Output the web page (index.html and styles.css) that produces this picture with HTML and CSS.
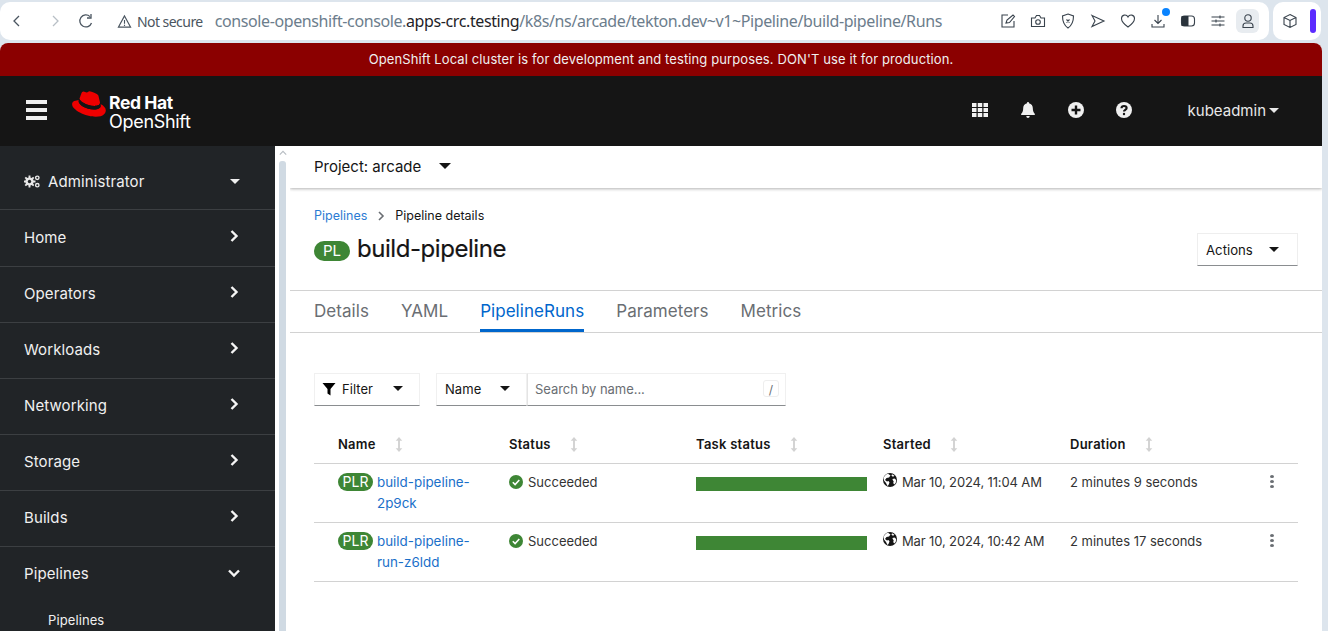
FILE: index.html
```html
<!DOCTYPE html>
<html lang="en">
<head>
    <meta charset="UTF-8">
    <title>build-pipeline - Pipeline details - Red Hat OpenShift</title>
    <link rel="stylesheet" href="styles.css">
</head>
<body>
    <!-- browser toolbar -->
    <div class="browser">
        <div class="omnibox">
            <svg class="nav-icon back" viewBox="0 0 16 16"><path d="M10 3 5 8l5 5"/></svg>
            <svg class="nav-icon forward" viewBox="0 0 16 16"><path d="m6 3 5 5-5 5"/></svg>
            <svg class="nav-icon reload" viewBox="0 0 16 16"><path d="M13.5 10A6 6 0 1 1 12 3.6"/><path d="M13 1v4H9" /></svg>
            <svg class="warn-icon" viewBox="0 0 16 16"><path d="M8 2 1.500 14h13z"/><path d="M8 6.500v4M8 11.500v1.200"/></svg>
            <span class="not-secure">Not secure</span>
            <span class="url">console-openshift-console.<b>apps-crc.testing</b>/k8s/ns/arcade/tekton.dev~v1~Pipeline/build-pipeline/Runs</span>
            <div class="tools">
                <svg viewBox="0 0 16 16"><path d="M8 2H2v12h12V8"/><path d="m6 10 1-3 6-5 1.500 1.500-5 6z"/></svg>
                <svg viewBox="0 0 16 16"><path d="M1.500 5h3.500l1.500-2.500h3L11 5h3.500v8.500h-13z"/><circle cx="8" cy="9" r="2.300"/></svg>
                <svg viewBox="0 0 16 16"><path d="M8 1 13.500 3c0 5.500-1 9-5.500 12C3.500 12 2.500 8.500 2.500 3z"/><path d="m6.500 6.500 3 3m0-3-3 3"/></svg>
                <svg viewBox="0 0 16 16"><path d="m2 2.500 12 5.500-12 5.500 3-5.500z"/></svg>
                <svg viewBox="0 0 16 16"><path d="M8 14C3 10.500 1.500 8 1.500 5.500 1.500 1.500 6.500 1 8 4c1.500-3 6.500-2.500 6.500 1.500C14.500 8 13 10.500 8 14z"/></svg>
                <span class="download">
                    <svg viewBox="0 0 16 16"><path d="M8 2v8M4.500 7 8 10.500 11.500 7M2 11v3h12v-3"/></svg>
                    <i class="download-dot"></i>
                </span>
                <svg viewBox="0 0 16 16"><rect x="1.500" y="3" width="13" height="10" rx="3"/><path class="solid" d="M1.500 3h7v10h-7z"/></svg>
                <svg viewBox="0 0 16 16"><path d="M1.500 4h13M1.500 8h13M1.500 12h13M10 2.500v3M6 6.500v3M10 10.500v3"/></svg>
                <span class="profile">
                    <svg viewBox="0 0 16 16"><circle cx="8" cy="5" r="3.200"/><path d="M3 14.500v-1.500c0-2 1.500-3 3-3h4c1.500 0 3 1 3 3v1.500z"/></svg>
                </span>
            </div>
        </div>
        <div class="ext-box">
            <svg viewBox="0 0 16 16"><path d="M8 1.500 14 4.500v7L8 14.500 2 11.500v-7zM2 4.500l6 3 6-3M8 7.500v7"/></svg>
            <i class="ext-pill"></i>
        </div>
    </div>

    <div class="app">
        <div class="banner">OpenShift Local cluster is for development and testing purposes. DON'T use it for production.</div>

        <header class="masthead">
            <div class="burger"><i></i><i></i><i></i></div>
            <svg class="hat" viewBox="0 0 192 145">
                <path fill="#e00" d="M127.470 83.490c12.510 0 30.610-2.580 30.610-17.460a14 14 0 0 0-.31-3.420l-7.450-32.360c-1.720-7.120-3.230-10.350-15.730-16.600C124.890 8.690 103.760.5 97.510.5 91.690.5 90 8 83.060 8c-6.680 0-11.640-5.600-17.890-5.600-6 0-9.910 4.090-12.930 12.500 0 0-8.410 23.720-9.490 27.160A6.430 6.430 0 0 0 42.530 44c0 9.220 36.300 39.450 84.940 39.450M160 72.070c1.730 8.190 1.730 9.050 1.730 10.130 0 14-15.740 21.770-36.430 21.770C78.540 104 37.580 76.600 37.580 58.490a18.450 18.450 0 0 1 1.510-7.330C22.270 52 .5 55 .5 74.220c0 31.480 74.590 70.280 133.650 70.280 45.280 0 56.700-20.480 56.700-36.650 0-12.720-11-27.160-30.830-35.780"/>
                <path fill="#151515" d="M160 72.070c1.730 8.190 1.730 9.050 1.730 10.130 0 14-15.740 21.770-36.430 21.770C78.540 104 37.580 76.600 37.580 58.490a18.450 18.450 0 0 1 1.510-7.330l3.660-9.060A6.430 6.430 0 0 0 42.530 44c0 9.220 36.300 39.450 84.940 39.450 12.510 0 30.610-2.580 30.610-17.460a14 14 0 0 0-.31-3.420z"/>
            </svg>
            <div class="brand">
                <span class="brand-top">Red Hat</span>
                <span class="brand-bottom">OpenShift</span>
            </div>
            <div class="mast-tools">
                <svg class="mast-icon" viewBox="0 0 16 16"><path d="M0 1h4.500v4H0zM5.750 1h4.500v4h-4.500zM11.500 1H16v4h-4.500zM0 6h4.500v4H0zM5.750 6h4.500v4h-4.500zM11.500 6H16v4h-4.500zM0 11h4.500v4H0zM5.750 11h4.500v4h-4.500zM11.500 11H16v4h-4.500z"/></svg>
                <svg class="mast-icon" viewBox="0 0 16 16"><path d="M8 0c-.7 0-1 .5-1 1.200C4.500 1.700 3.200 3.700 3.200 6c0 3.500-1 4.700-2 5.800-.4.500-.2 1.200.5 1.200h12.600c.7 0 .9-.7.500-1.200-1-1.100-2-2.300-2-5.800 0-2.300-1.300-4.300-3.800-4.800C9 .5 8.700 0 8 0zM6.300 14c0 1 .8 2 1.700 2s1.700-1 1.700-2z"/></svg>
                <svg class="mast-icon" viewBox="0 0 16 16"><circle cx="8" cy="8" r="8"/><path class="cut" d="M6.800 3.500h2.400v3.300h3.300v2.400H9.200v3.300H6.800V9.200H3.500V6.800h3.300z"/></svg>
                <svg class="mast-icon" viewBox="0 0 16 16"><circle cx="8" cy="8" r="8"/><path class="cut-line" d="M5.500 6.200C5.600 4.700 6.600 4 8 4s2.600.8 2.600 2.100c0 1.800-2.600 1.900-2.600 3.500"/><circle class="cut" cx="8" cy="12" r="1.200"/></svg>
            </div>
            <div class="user">kubeadmin<i class="caret caret-user"></i></div>
        </header>

        <div class="body-row">
            <nav class="sidebar">
                <div class="nav-row nav-perspective">
                    <span class="nav-label">
                        <svg class="cogs" viewBox="0 0 16 13">
                            <path stroke="#e8e8e8" stroke-width="1.900" d="M5.500 .5v12M-.5 6.500h12M1.300 2.300l8.400 8.400M9.700 2.300l-8.400 8.400"/>
                            <circle cx="5.500" cy="6.500" r="4.100" fill="#e8e8e8"/>
                            <circle cx="5.500" cy="6.500" r="1.700" fill="#212427"/>
                            <circle cx="13.300" cy="2.800" r="1.700" fill="none" stroke="#e8e8e8" stroke-width="1.400"/>
                            <circle cx="13.300" cy="10.200" r="1.700" fill="none" stroke="#e8e8e8" stroke-width="1.400"/>
                        </svg>
                        Administrator
                    </span>
                    <i class="caret caret-nav"></i>
                </div>
                <div class="nav-row nav-home">Home<svg class="chev" viewBox="0 0 10 14"><path d="m2.500 2 5 5-5 5"/></svg></div>
                <div class="nav-row">Operators<svg class="chev" viewBox="0 0 10 14"><path d="m2.500 2 5 5-5 5"/></svg></div>
                <div class="nav-row">Workloads<svg class="chev" viewBox="0 0 10 14"><path d="m2.500 2 5 5-5 5"/></svg></div>
                <div class="nav-row">Networking<svg class="chev" viewBox="0 0 10 14"><path d="m2.500 2 5 5-5 5"/></svg></div>
                <div class="nav-row">Storage<svg class="chev" viewBox="0 0 10 14"><path d="m2.500 2 5 5-5 5"/></svg></div>
                <div class="nav-row">Builds<svg class="chev" viewBox="0 0 10 14"><path d="m2.500 2 5 5-5 5"/></svg></div>
                <div class="nav-row nav-open">Pipelines<svg class="chev chev-down" viewBox="0 0 14 10"><path d="m2 2.500 5 5 5-5"/></svg></div>
                <div class="nav-sub">Pipelines</div>
            </nav>

            <div class="scroller">
                <svg class="scroll-up" viewBox="0 0 10 6"><path d="m1 5 4-4 4 4"/></svg>
                <div class="scroll-thumb"></div>
            </div>

            <main class="content">
                <div class="project-bar">
                    <span>Project: arcade</span>
                    <i class="caret caret-project"></i>
                </div>

                <div class="page-head">
                    <div class="crumbs">
                        <a class="link">Pipelines</a>
                        <svg class="crumb-sep" viewBox="0 0 8 10"><path d="m2 1 4 4-4 4"/></svg>
                        <span>Pipeline details</span>
                    </div>
                    <div class="title-row">
                        <h1 class="title"><span class="badge badge-pl">PL</span>build-pipeline</h1>
                        <button class="actions">Actions<i class="caret caret-dark"></i></button>
                    </div>
                </div>

                <div class="tabs">
                    <a class="tab">Details</a>
                    <a class="tab">YAML</a>
                    <a class="tab active">PipelineRuns</a>
                    <a class="tab">Parameters</a>
                    <a class="tab">Metrics</a>
                </div>

                <div class="list-area">
                    <div class="toolbar">
                        <div class="select filter">
                            <svg class="funnel" viewBox="0 0 14 14"><path d="M.5 1h13L8.500 7v6.500l-3-2V7z"/></svg>
                            <span>Filter</span>
                            <i class="caret caret-dark"></i>
                        </div>
                        <div class="search-group">
                            <div class="select name-select"><span>Name</span><i class="caret caret-dark"></i></div>
                            <div class="search">
                                <span class="placeholder">Search by name...</span>
                                <span class="slash">/</span>
                            </div>
                        </div>
                    </div>

                    <table class="runs">
                        <colgroup>
                            <col class="col-name"><col class="col-std"><col class="col-std"><col class="col-std"><col class="col-std"><col>
                        </colgroup>
                        <thead>
                            <tr>
                                <th class="first">Name<svg class="sort" viewBox="0 0 8 16"><path d="M4 0 7.500 4h-2.500v8h2.500L4 16 .5 12H3V4H.5z"/></svg></th>
                                <th>Status<svg class="sort" viewBox="0 0 8 16"><path d="M4 0 7.500 4h-2.500v8h2.500L4 16 .5 12H3V4H.5z"/></svg></th>
                                <th>Task status<svg class="sort" viewBox="0 0 8 16"><path d="M4 0 7.500 4h-2.500v8h2.500L4 16 .5 12H3V4H.5z"/></svg></th>
                                <th>Started<svg class="sort" viewBox="0 0 8 16"><path d="M4 0 7.500 4h-2.500v8h2.500L4 16 .5 12H3V4H.5z"/></svg></th>
                                <th>Duration<svg class="sort" viewBox="0 0 8 16"><path d="M4 0 7.500 4h-2.500v8h2.500L4 16 .5 12H3V4H.5z"/></svg></th>
                                <th></th>
                            </tr>
                        </thead>
                        <tbody>
                            <tr>
                                <td class="first"><div class="run-name"><span class="badge badge-plr">PLR</span><a class="link">build-pipeline-<br>2p9ck</a></div></td>
                                <td><span class="status"><svg class="ok" viewBox="0 0 14 14"><circle cx="7" cy="7" r="7"/><path d="m3.800 7.200 2.300 2.300 4.200-4.500"/></svg>Succeeded</span></td>
                                <td><div class="bar"></div></td>
                                <td><span class="started"><svg class="globe" viewBox="0 0 14 14"><circle cx="7" cy="7" r="7"/><path d="M5 .8 7.500 2.500 6 4.500 3.500 5 2 7 4 8.500 5.500 8l1 1.500L5.500 12l-1 1-1.500-3-2-2.500-.5-3L3 1.500zM9.500 6l2-.5 1.700 1.500-.5 3-1.500 1.500-1-1.500.5-1.500-1-1.500zM9 1.200l2.500 1.500-1.500 1-1.500-1z" fill="#fff"/></svg>Mar 10, 2024, 11:04 AM</span></td>
                                <td>2 minutes 9 seconds</td>
                                <td><span class="kebab"><i></i><i></i><i></i></span></td>
                            </tr>
                            <tr>
                                <td class="first"><div class="run-name"><span class="badge badge-plr">PLR</span><a class="link">build-pipeline-<br>run-z6ldd</a></div></td>
                                <td><span class="status"><svg class="ok" viewBox="0 0 14 14"><circle cx="7" cy="7" r="7"/><path d="m3.800 7.200 2.300 2.300 4.200-4.500"/></svg>Succeeded</span></td>
                                <td><div class="bar"></div></td>
                                <td><span class="started"><svg class="globe" viewBox="0 0 14 14"><circle cx="7" cy="7" r="7"/><path d="M5 .8 7.500 2.500 6 4.500 3.500 5 2 7 4 8.500 5.500 8l1 1.500L5.500 12l-1 1-1.500-3-2-2.500-.5-3L3 1.500zM9.500 6l2-.5 1.700 1.500-.5 3-1.500 1.500-1-1.500.5-1.500-1-1.500zM9 1.200l2.500 1.500-1.500 1-1.500-1z" fill="#fff"/></svg>Mar 10, 2024, 10:42 AM</span></td>
                                <td>2 minutes 17 seconds</td>
                                <td><span class="kebab"><i></i><i></i><i></i></span></td>
                            </tr>
                        </tbody>
                    </table>
                </div>
            </main>
        </div>
    </div>
</body>
</html>
```

FILE: styles.css
```css
* {
    margin: 0;
    padding: 0;
    box-sizing: border-box;
}
html, body {
    height: 631px;
    overflow: hidden;
}
body {
    background: #dde5ed;
    font-family: 'Inter', 'Noto Sans', sans-serif;
    font-size: 14px;
    color: #151515;
}
i {
    display: block;
}

/* browser toolbar */
.browser {
    display: flex;
    gap: 4px;
    height: 43px;
    padding: 2px 7px 3px 0;
}
.omnibox {
    flex: 1;
    display: flex;
    align-items: center;
    background: white;
    border-radius: 10px;
    padding-left: 9px;
}
.nav-icon {
    width: 16px;
    height: 16px;
    fill: none;
    stroke: #4a5560;
    stroke-width: 1.3;
}
.forward {
    margin-left: 22px;
    stroke: #b8bfc6;
}
.reload {
    margin-left: 15px;
}
.warn-icon {
    width: 15px;
    height: 15px;
    margin-left: 23px;
    fill: none;
    stroke: #4a5560;
    stroke-width: 1.2;
}
.not-secure {
    margin-left: 5px;
    font-family: 'Noto Sans', sans-serif;
    font-size: 14px;
    letter-spacing: -0.55px;
    color: #4a5560;
}
.url {
    margin-left: 12px;
    font-family: 'Noto Sans', sans-serif;
    font-size: 16px;
    letter-spacing: -0.39px;
    color: #6c7d8c;
    white-space: nowrap;
}
.url b {
    font-weight: 400;
    color: #1f2328;
}
.tools {
    display: flex;
    align-items: center;
    gap: 14px;
    margin-left: auto;
    padding-right: 10px;
}
.tools svg {
    display: block;
    width: 16px;
    height: 16px;
    fill: none;
    stroke: #39434d;
    stroke-width: 1.1;
}
.tools svg .solid {
    fill: #2a333c;
    stroke: none;
}
.download {
    position: relative;
}
.download-dot {
    position: absolute;
    top: -5px;
    right: -4px;
    width: 8px;
    height: 8px;
    border-radius: 50%;
    background: #0a84ff;
}
.profile {
    display: flex;
    align-items: center;
    justify-content: center;
    width: 23px;
    height: 24px;
    background: #e8ecf0;
    border-radius: 6px;
    margin-left: -4px;
}
.ext-box {
    width: 48px;
    display: flex;
    align-items: center;
    gap: 12px;
    padding-left: 9px;
    background: white;
    border-radius: 10px;
}
.ext-box svg {
    width: 16px;
    height: 16px;
    flex-shrink: 0;
    fill: none;
    stroke: #39434d;
    stroke-width: 1.1;
}
.ext-pill {
    width: 6px;
    height: 24px;
    flex-shrink: 0;
    border-radius: 3px;
    background: #5b2bff;
}

/* console */
.app {
    margin-right: 6px;
    height: 588px;
    display: flex;
    flex-direction: column;
    background: white;
    border-radius: 8px 8px 0 0;
    overflow: hidden;
}
.banner {
    height: 33px;
    flex-shrink: 0;
    background: #8b0000;
    color: #f0f0f0;
    font-size: 13px;
    letter-spacing: 0.11px;
    line-height: 33px;
    text-align: center;
}
.masthead {
    height: 70px;
    flex-shrink: 0;
    display: flex;
    align-items: center;
    padding-bottom: 2px;
    background: #151515;
    color: #e8e8e8;
}
.burger {
    display: flex;
    flex-direction: column;
    gap: 4px;
    width: 21px;
    margin-left: 26px;
}
.burger i {
    height: 4px;
    background: #eee;
}
.hat {
    width: 34px;
    height: 26px;
    margin: -12px 0 0 25px;
}
.brand {
    display: flex;
    flex-direction: column;
    margin: 6px 0 0 3px;
    color: white;
}
.brand-top {
    font-size: 17.500px;
    font-weight: 700;
    line-height: 18px;
    letter-spacing: -0.4px;
}
.brand-bottom {
    font-size: 18px;
    line-height: 20px;
    letter-spacing: -0.3px;
}
.mast-tools {
    display: flex;
    align-items: center;
    gap: 32px;
    margin-left: auto;
}
.mast-icon {
    display: block;
    width: 16px;
    height: 16px;
    fill: #f0f0f0;
}
.mast-icon .cut {
    fill: #151515;
}
.mast-icon .cut-line {
    fill: none;
    stroke: #151515;
    stroke-width: 2.2;
}
.user {
    display: flex;
    align-items: center;
    margin: 0 43px 0 56px;
    font-size: 15px;
}
.caret {
    width: 0;
    height: 0;
    border-left: 5px solid transparent;
    border-right: 5px solid transparent;
    border-top: 5px solid #e8e8e8;
}
.caret-user {
    margin-left: 3px;
}
.caret-dark {
    border-top-color: #151515;
}
.body-row {
    flex: 1;
    display: flex;
    min-height: 0;
}

/* sidebar */
.sidebar {
    width: 275px;
    flex-shrink: 0;
    background: #212427;
    color: #f0f0f0;
    font-size: 15px;
    letter-spacing: 0.1px;
}
.nav-row {
    height: 56px;
    display: flex;
    align-items: center;
    justify-content: space-between;
    padding: 0 36px 2px 24px;
    border-bottom: 1px solid #3c3f42;
}
.nav-perspective {
    height: 64px;
    padding-top: 8px;
    padding-bottom: 0;
}
.nav-home {
    height: 57px;
}
.nav-label {
    display: flex;
    align-items: center;
    gap: 8px;
}
.cogs {
    width: 16px;
    height: 13px;
}
.caret-nav {
    border-top-color: #f0f0f0;
    margin-right: -1px;
}
.chev {
    width: 10px;
    height: 14px;
    fill: none;
    stroke: #f5f5f5;
    stroke-width: 2.4;
    margin-top: -3px;
}
.chev-down {
    width: 14px;
    height: 10px;
    margin-right: -2px;
    margin-top: 0;
}
.nav-open {
    border-bottom: none;
    padding-bottom: 4px;
}
.nav-sub {
    padding: 6px 0 0 48px;
    font-size: 13px;
    line-height: 22px;
}

/* scrollbar strip */
.scroller {
    width: 15px;
    flex-shrink: 0;
    padding: 4px 0 0 4px;
}
.scroll-up {
    display: block;
    width: 8px;
    height: 6px;
    margin-bottom: 5px;
    fill: none;
    stroke: #b6bcc2;
    stroke-width: 1.4;
}
.scroll-thumb {
    width: 7px;
    height: 470px;
    background: #d0dae3;
    border-radius: 3px 3px 0 0;
}

/* main content */
.content {
    flex: 1;
    min-width: 0;
    overflow: hidden;
}
.project-bar {
    height: 42px;
    display: flex;
    align-items: center;
    padding: 0 0 2px 24px;
    font-size: 15px;
    box-shadow: 0 1px 3px rgba(0, 0, 0, 0.3);
}
.caret-project {
    margin-left: 18px;
    border-top-color: #151515;
    border-left-width: 6px;
    border-right-width: 6px;
    border-top-width: 6px;
}
.page-head {
    height: 102px;
    padding: 21px 24px 0;
}
.crumbs {
    display: flex;
    align-items: center;
    gap: 10px;
    font-size: 12.500px;
    line-height: 14px;
}
.crumb-sep {
    width: 8px;
    height: 10px;
    fill: none;
    stroke: #6a6e73;
    stroke-width: 1.6;
}
.link {
    color: #1a6fc9;
}
.crumbs .link {
    color: #2b7bd3;
}
.title-row {
    display: flex;
    align-items: flex-start;
    justify-content: space-between;
    margin-top: 11px;
}
.title {
    display: flex;
    align-items: center;
    font-size: 24px;
    font-weight: 400;
    line-height: 30px;
    letter-spacing: -0.45px;
    -webkit-text-stroke: 0.2px #151515;
}
.badge {
    display: inline-block;
    background: #3e8635;
    color: white;
    text-align: center;
    -webkit-text-stroke: 0;
    letter-spacing: 0;
    font-weight: 400;
    flex-shrink: 0;
}
.badge-pl {
    width: 36px;
    height: 20px;
    border-radius: 10px;
    margin: 3px 7px 0 0;
    font-size: 15px;
    line-height: 20px;
}
.badge-plr {
    width: 35px;
    height: 18px;
    border-radius: 9px;
    margin: 1px 4px 0 0;
    font-size: 14px;
    line-height: 18px;
}
.actions {
    width: 101px;
    height: 33px;
    margin-top: -1px;
    display: flex;
    align-items: center;
    justify-content: space-between;
    padding: 0 18px 0 8px;
    background: white;
    border: 1px solid #eee;
    border-bottom: 1px solid #8a8d90;
    font-family: inherit;
    font-size: 13.200px;
    color: #151515;
}

/* tabs */
.tabs {
    height: 43px;
    display: flex;
    gap: 32px;
    padding-left: 24px;
    border-top: 1px solid #d2d2d2;
    border-bottom: 1px solid #d2d2d2;
}
.tab {
    height: 41px;
    line-height: 41px;
    font-size: 17px;
    letter-spacing: 0.05px;
    color: #6a6e73;
}
.tab.active {
    color: #0066cc;
    border-bottom: 3px solid #0066cc;
}

/* list */
.list-area {
    padding: 40px 24px 0;
}
.toolbar {
    display: flex;
    gap: 16px;
    height: 33px;
    font-size: 13px;
    letter-spacing: 0.05px;
}
.select {
    display: flex;
    align-items: center;
    padding-bottom: 2px;
    background: white;
    border: 1px solid #f0f0f0;
    border-bottom: 1px solid #8a8d90;
}
.filter {
    width: 106px;
    padding: 0 16px 2px 7px;
}
.filter span {
    margin-left: 6px;
}
.filter .caret {
    margin-left: auto;
}
.funnel {
    width: 14px;
    height: 14px;
}
.search-group {
    display: flex;
}
.name-select {
    width: 91px;
    justify-content: space-between;
    padding: 0 16px 2px 8px;
}
.search {
    width: 259px;
    display: flex;
    align-items: center;
    justify-content: space-between;
    padding: 0 6px 2px 7px;
    border: 1px solid #f0f0f0;
    border-left: 1px solid #e4e4e4;
    border-bottom: 1px solid #8a8d90;
}
.placeholder {
    color: #6a6e73;
    letter-spacing: -0.05px;
}
.slash {
    width: 16px;
    height: 17px;
    text-align: center;
    line-height: 17px;
    color: #6a6e73;
    border: 1px solid #eee;
    border-radius: 3px;
    font-size: 12px;
}
.runs {
    width: 984px;
    margin-top: 21px;
    border-collapse: collapse;
    table-layout: fixed;
    font-size: 13px;
}
.col-name {
    width: 195px;
}
.col-std {
    width: 187px;
}
.runs th {
    height: 36px;
    padding-bottom: 2px;
    text-align: left;
    font-size: 13px;
    letter-spacing: 0.25px;
    font-weight: 600;
    vertical-align: middle;
}
.runs th, .runs td {
    border-bottom: 1px solid #d2d2d2;
}
.runs td {
    height: 59px;
    padding-top: 8px;
    vertical-align: top;
    line-height: 21px;
    color: #333;
}
.runs .first {
    padding-left: 24px;
}
.sort {
    width: 8px;
    height: 15px;
    margin-left: 19px;
    vertical-align: -3px;
    fill: #d2d2d2;
}
.run-name {
    display: flex;
    align-items: flex-start;
}
.run-name .link {
    font-size: 13.400px;
}
.status {
    display: flex;
    align-items: center;
    gap: 5px;
}
.ok {
    width: 14px;
    height: 14px;
    fill: #3e8635;
    stroke: white;
    stroke-width: 1.6;
}
.ok circle {
    stroke: none;
}
.ok path {
    fill: none;
}
.bar {
    width: 171px;
    height: 14px;
    margin-top: 5px;
    background: #3e8635;
}
.started {
    display: flex;
    align-items: flex-start;
    gap: 5px;
    white-space: nowrap;
    letter-spacing: -0.13px;
}
.globe {
    width: 14px;
    height: 14px;
    margin-top: 1px;
    flex-shrink: 0;
    fill: #151515;
}
.kebab {
    display: flex;
    flex-direction: column;
    gap: 2px;
    width: 4px;
    margin: 3px 24px 0 auto;
}
.kebab i {
    width: 4px;
    height: 3px;
    border-radius: 50%;
    background: #6a6e73;
}
```
